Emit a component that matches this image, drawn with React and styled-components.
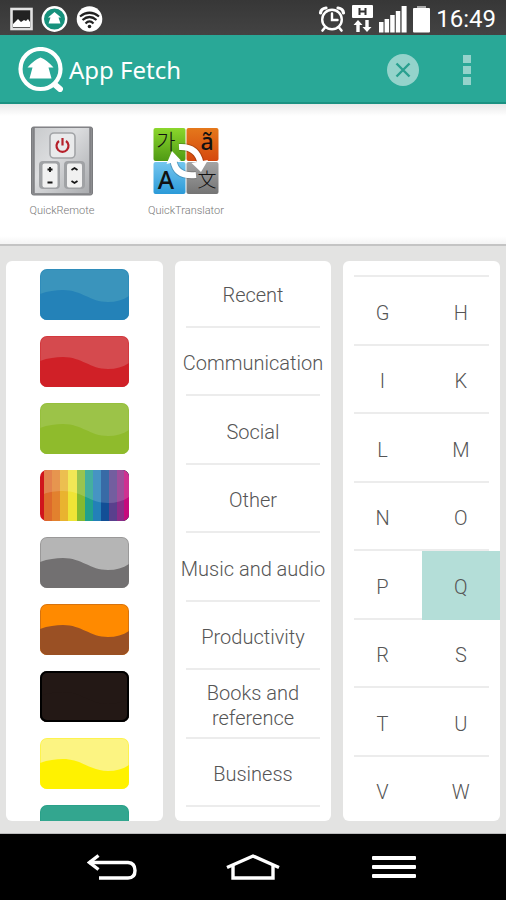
import * as React from 'react'
import styled, { createGlobalStyle } from 'styled-components'

const GlobalStyle = createGlobalStyle`
* { box-sizing: border-box; }

body {
  margin: 0;
  background: #e3e3e2;
  font-family: Roboto, "Noto Sans", sans-serif;
}

button {
  border: 0;
  padding: 0;
  background: none;
  color: inherit;
  font: inherit;
  cursor: pointer;
}

svg { display: block; flex: none; }
`

const Page = styled.div`
  height: 100vh;
  min-height: 600px;
  display: flex;
  flex-direction: column;
`

const StatusBar = styled.div`
  flex: none;
  height: 35px;
  padding: 2px 10px 0;
  display: flex;
  align-items: center;
  justify-content: space-between;
  background: linear-gradient(#373737, #434343);
  color: #fff;
`

const StatusGroup = styled.div`
  display: flex;
  align-items: center;
  gap: ${props => props.$gap};
`

const Clock = styled.time`
  font-size: 24px;
  line-height: 32px;
`

const Header = styled.header`
  flex: none;
  height: 69px;
  padding: 2px 23px 0 18px;
  display: flex;
  align-items: center;
  background: #29a897;
  border-bottom: 2px solid #1b9282;
`

const Title = styled.h1`
  flex: 1;
  margin: 0 0 0 6px;
  color: #fff;
  font-family: "Noto Sans", "Open Sans", sans-serif;
  font-size: 24px;
  font-weight: 400;
  line-height: 32px;
`

const HeaderButton = styled.button`
  width: 32px;
  height: 32px;
  margin-left: 32px;
  display: flex;
  align-items: center;
  justify-content: center;
`

const Results = styled.section`
  flex: none;
  height: 142px;
  padding-top: 22px;
  display: flex;
  background: linear-gradient(#e9e9e9, #fff 12px, #fff 132px, #f4f4f4);
  border-bottom: 2px solid #c4c4c4;
`

const AppTile = styled.button`
  width: 124px;
  display: flex;
  flex-direction: column;
  align-items: center;
  color: #777;
  font-size: 11px;
  font-weight: 300;
  line-height: 14px;

  svg { margin-bottom: 8px; }
`

const Filters = styled.main`
  flex: 1;
  min-height: 0;
  padding: 15px 6px 12px;
  display: grid;
  grid-template-columns: repeat(3, 1fr);
  grid-template-rows: 100%;
  gap: 12px;
  background: #e3e3e2;
  border-bottom: 1px solid #bdbdbd;
`

const Panel = styled.section`
  overflow: hidden;
  display: flex;
  flex-direction: column;
  border-radius: 6px;
  background: #fff;
  color: #555;
  font-size: 20px;
  font-weight: 300;
  line-height: 25px;
`

const Swatches = styled.div`
  padding-top: 8px;
  display: flex;
  flex-direction: column;
  align-items: center;
  gap: 16px;
`

const Swatch = styled.button`
  flex: none;
  height: 51px;
  overflow: hidden;
  border-radius: 7px;
`

const rowLine = `
  background: linear-gradient(#ececec, #ececec) no-repeat bottom / calc(100% - 22px) 2px;
`

const Categories = styled.div`
  flex: 1;
  margin: -2px 0 14px;
  display: grid;
  grid-auto-rows: 1fr;
`

const Category = styled.button`
  padding-top: 4px;
  ${rowLine}
`

const CategoryName = styled.span`
  display: inline-block;
  max-width: 150px;
`

const Letters = styled.div`
  flex: 1;
  margin-bottom: -4px;
  display: grid;
  grid-template-rows: 16px;
  grid-auto-rows: 1fr;
`

const LetterRow = styled.div`
  display: grid;
  grid-template-columns: 1fr 1fr;
  ${rowLine}
`

const Letter = styled.button`
  padding-top: 4px;
  background: ${props => (props.$active ? '#b4ded8' : 'none')};
`

const NavBar = styled.nav`
  flex: none;
  height: 66px;
  padding: 0 42px;
  display: grid;
  grid-template-columns: repeat(3, 1fr);
  background: #000;
`

const NavButton = styled.button`
  display: flex;
  align-items: center;
  justify-content: center;
`

const WAVE = 'M0 25 C8 22 16 21 23 21 C42 21 50 33 68 33 C76 33 83 31 89 27 V51 H0 Z'

const colors = [
  { name: 'blue', top: '#3a94bc', base: '#2482b8' },
  { name: 'red', top: '#d54a4e', base: '#d02027' },
  { name: 'green', top: '#9cc348', base: '#8fbb2c' },
  { name: 'rainbow' },
  { name: 'grey', top: '#b5b5b5', base: '#727071' },
  { name: 'orange', top: '#ff8a00', base: '#9a5024' },
  { name: 'black', top: '#231815', base: '#231815', edge: '#000' },
  { name: 'yellow', top: '#fcf482', base: '#fff200' },
  { name: 'teal', top: '#33a68f', base: '#1f9a80' },
]

const stripes = [
  [0, '#d0141c'],
  [4, '#dd6a2b'],
  [12, '#e2812e'],
  [20, '#e9b32f'],
  [28, '#efe436'],
  [37, '#85b92f'],
  [45, '#21a08d'],
  [53, '#2380b8'],
  [61, '#124f96'],
  [69, '#59408d'],
  [77, '#8c2d88'],
  [84, '#c50a7c'],
]

const categories = [
  'Recent',
  'Communication',
  'Social',
  'Other',
  'Music and audio',
  'Productivity',
  'Books and reference',
  'Business',
]

const letters = ['GH', 'IK', 'LM', 'NO', 'PQ', 'RS', 'TU', 'VW']

const FetchLogo = ({ size }) => (
  <svg width={size} height={size} viewBox="0 0 45 45">
    <path d="M35 36 L42 42" stroke="#fff" strokeWidth="6" strokeLinecap="round" />
    <circle cx="22.5" cy="22" r="20" fill="#29a897" stroke="#fff" strokeWidth="4.2" />
    <path d="M22.5 10.5 Q29 13 35.5 20.5 H30.5 L33.5 31.5 H11.5 L14.5 20.5 H9.5 Q16 13 22.5 10.5 Z" fill="#fff" />
  </svg>
)

const PictureIcon = () => (
  <svg width="23" height="24" viewBox="0 0 23 24">
    <rect x="1.5" y="2" width="20" height="20" fill="#222" stroke="#e2e2e2" strokeWidth="2.6" />
    <path d="M3 17 L8 12 L11 15 L14 13 L16 14 L18 12 L20 15 V20 H3 Z" fill="#fff" />
  </svg>
)

const StatusLogo = () => (
  <svg width="27" height="28" viewBox="0 0 27 28">
    <circle cx="13.5" cy="14" r="11.7" fill="#16917c" stroke="#fff" strokeWidth="2.4" />
    <path d="M13.5 7 L20 12.5 H17.5 L19.5 18.5 H7.5 L9.5 12.5 H7 Z" fill="#fff" />
  </svg>
)

const WifiIcon = () => (
  <svg width="27" height="28" viewBox="0 0 27 28">
    <circle cx="13.5" cy="14" r="12.8" fill="#fff" />
    <g fill="none" stroke="#222" strokeWidth="2.2">
      <path d="M4 11.5 Q13.5 4 23 11.5" />
      <path d="M6.5 15 Q13.5 9 20.5 15" />
      <path d="M9.5 18.5 Q13.5 14.5 17.5 18.5" />
    </g>
    <circle cx="13.5" cy="21.5" r="1.8" fill="#222" />
  </svg>
)

const AlarmIcon = () => (
  <svg width="28" height="28" viewBox="0 0 28 28" fill="none" stroke="#fff" strokeLinecap="round">
    <circle cx="14" cy="14.5" r="9.8" strokeWidth="2.4" />
    <path d="M14 8.5 V15 H19.5" strokeWidth="2.4" />
    <path d="M2.5 8 Q3 3.5 8 3 M25.5 8 Q25 3.5 20 3" strokeWidth="3.2" />
    <path d="M7 22.5 L4.5 25.5 M21 22.5 L23.5 25.5" strokeWidth="2.6" />
  </svg>
)

const DataIcon = () => (
  <svg width="21" height="28" viewBox="0 0 21 28">
    <rect width="21" height="13" rx="1" fill="#fff" />
    <path d="M7.5 3 V10 M13.5 3 V10 M7 6.5 H14" stroke="#333" strokeWidth="2" />
    <path d="M6 15 L10.5 20 H7.7 V27 H4.3 V20 H1.5 Z M15 27 L19.5 22 H16.7 V15 H13.3 V22 H10.5 Z" fill="#fff" />
  </svg>
)

const SignalIcon = () => (
  <svg width="28" height="28" viewBox="0 0 28 28" fill="#fff">
    <rect x="0" y="17" width="4.5" height="10.5" />
    <rect x="5.6" y="14" width="4.5" height="13.5" />
    <rect x="11.2" y="10" width="4.5" height="17.5" />
    <rect x="16.8" y="6" width="4.5" height="21.5" />
    <rect x="22.6" y="1" width="5" height="26.5" />
  </svg>
)

const BatteryIcon = () => (
  <svg width="17" height="28" viewBox="0 0 17 28">
    <rect x="4" y="1" width="9" height="4" fill="#aaa" />
    <rect y="3" width="17" height="24.5" rx="1" fill="#fff" />
  </svg>
)

const RemoteIcon = () => (
  <svg width="62" height="70" viewBox="0 0 62 70">
    <defs>
      <linearGradient id="remoteBody" x1="0" x2="1" y1="0" y2="1">
        <stop offset="0" stopColor="#c9cbcd" />
        <stop offset="0.4" stopColor="#dcdddf" />
        <stop offset="1" stopColor="#a9abae" />
      </linearGradient>
    </defs>
    <rect x="0.5" y="1" width="61" height="68" rx="2" fill="#8c8d90" stroke="#7a7b7e" />
    <rect x="3.5" y="2" width="55" height="65" fill="url(#remoteBody)" />
    <path d="M3 1 V67 M59 1 V67" stroke="#76777a" />
    <rect x="19" y="7" width="25" height="25" rx="4" fill="#e9eaeb" stroke="#a2a4a7" strokeWidth="1.6" />
    <path d="M28 15 A6 6 0 1 0 35 15" fill="none" stroke="#b6202a" strokeWidth="2.2" />
    <path d="M31.5 12 V19.5" stroke="#b6202a" strokeWidth="2.2" />
    <rect x="8" y="35" width="21" height="28" rx="4" fill="#a0a2a5" />
    <rect x="33" y="35" width="21" height="28" rx="4" fill="#a0a2a5" />
    <rect x="11.5" y="37.5" width="15" height="24" rx="2" fill="#f1f1f1" />
    <rect x="36" y="37.5" width="15" height="24" rx="2" fill="#f1f1f1" />
    <g fill="none" stroke="#151515" strokeWidth="1.8">
      <path d="M19 41 V46 M16.5 43.5 H21.5 M16.5 56.5 H21.5" />
      <path d="M40.5 44 L43.5 42 L46.5 44 M40.5 55 L43.5 57 L46.5 55" />
    </g>
  </svg>
)

const TranslatorIcon = () => (
  <svg width="66" height="70" viewBox="0 0 66 70" overflow="visible">
    <defs>
      <linearGradient id="tGreen" x2="0" y2="1">
        <stop offset="0" stopColor="#8bd62c" />
        <stop offset="1" stopColor="#4f9a14" />
      </linearGradient>
      <linearGradient id="tOrange" x2="0" y2="1">
        <stop offset="0" stopColor="#e5781b" />
        <stop offset="1" stopColor="#d5480e" />
      </linearGradient>
      <linearGradient id="tBlue" x2="0" y2="1">
        <stop offset="0" stopColor="#74c6ef" />
        <stop offset="1" stopColor="#2b9ad8" />
      </linearGradient>
      <linearGradient id="tGrey" x2="0" y2="1">
        <stop offset="0" stopColor="#a4a4a4" />
        <stop offset="1" stopColor="#747474" />
      </linearGradient>
    </defs>
    <rect x="0.5" y="2" width="32" height="33" rx="2" fill="url(#tGreen)" />
    <rect x="33.5" y="2" width="32" height="33" rx="2" fill="url(#tOrange)" />
    <rect x="0.5" y="36" width="32" height="32" rx="2" fill="url(#tBlue)" />
    <rect x="33.5" y="36" width="32" height="32" rx="2" fill="url(#tGrey)" />
    <g fill="#111" textAnchor="middle" fontFamily='"Noto Sans", "Noto Sans CJK KR", sans-serif'>
      <text x="13" y="23" fontSize="21">가</text>
      <text x="54" y="24" fontSize="23" fontWeight="500">ã</text>
      <text x="13" y="63" fontSize="25" fontWeight="500">A</text>
      <text x="54" y="61" fontSize="19">文</text>
    </g>
    <g fill="none" stroke="#000" strokeWidth="8" opacity="0.18">
      <path d="M26 21 Q44 20 47.5 37" />
      <path d="M43 49 Q23 51 20.5 35" />
    </g>
    <g fill="none" stroke="#fff" strokeWidth="6">
      <path d="M26 21 Q44 20 47.5 37" />
      <path d="M43 49 Q23 51 20.5 35" />
    </g>
    <path d="M38.5 37 L55 34 L48 46 Z M13.5 38 L28 34.5 L19 25 Z" fill="#fff" />
  </svg>
)

const ColorTile = ({ color }) => (
  <svg width="89" height="51" viewBox="0 0 89 51">
    {color.top ? (
      <>
        <rect width="89" height="51" fill={color.top} />
        <path d={WAVE} fill={color.base} />
      </>
    ) : (
      <>
        {stripes.map(([x, fill]) => (
          <rect key={x} x={x} width={89 - x} height="51" fill={fill} />
        ))}
        <path d="M4 0 H89 V27 C83 31 76 33 68 33 C50 33 42 21 23 21 C16 21 8 22 4 24 Z" fill="#fff" opacity="0.16" />
      </>
    )}
    <rect
      x="0.5"
      y="0.5"
      width="88"
      height="50"
      rx="6.5"
      fill="none"
      stroke={color.edge || color.base || 'none'}
      strokeWidth={color.edge ? 3 : 1}
      opacity={color.edge ? 1 : 0.4}
    />
  </svg>
)

const App = () => {
  const [active, setActive] = React.useState('Q')

  return (
    <Page>
      <GlobalStyle />
      <StatusBar>
        <StatusGroup $gap="8px">
          <PictureIcon />
          <StatusLogo />
          <WifiIcon />
        </StatusGroup>
        <StatusGroup $gap="6px">
          <AlarmIcon />
          <DataIcon />
          <SignalIcon />
          <BatteryIcon />
          <Clock>16:49</Clock>
        </StatusGroup>
      </StatusBar>

      <Header>
        <FetchLogo size={45} />
        <Title>App Fetch</Title>
        <HeaderButton aria-label="Clear">
          <svg width="32" height="32" viewBox="0 0 32 32">
            <circle cx="16" cy="16" r="16" fill="#94d3cb" />
            <path d="M9.5 9.5 L22.5 22.5 M22.5 9.5 L9.5 22.5" stroke="#29a08f" strokeWidth="2.4" />
          </svg>
        </HeaderButton>
        <HeaderButton aria-label="More options">
          <svg width="8" height="30" viewBox="0 0 8 30" fill="#94d3cb">
            <rect width="8" height="8" />
            <rect y="11" width="8" height="8" />
            <rect y="22" width="8" height="8" />
          </svg>
        </HeaderButton>
      </Header>

      <Results>
        <AppTile>
          <RemoteIcon />
          QuickRemote
        </AppTile>
        <AppTile>
          <TranslatorIcon />
          QuickTranslator
        </AppTile>
      </Results>

      <Filters>
        <Panel>
          <Swatches>
            {colors.map(color => (
              <Swatch key={color.name} aria-label={color.name}>
                <ColorTile color={color} />
              </Swatch>
            ))}
          </Swatches>
        </Panel>
        <Panel>
          <Categories>
            {categories.map(name => (
              <Category key={name}>
                <CategoryName>{name}</CategoryName>
              </Category>
            ))}
          </Categories>
        </Panel>
        <Panel>
          <Letters>
            <LetterRow />
            {letters.map(pair => (
              <LetterRow key={pair}>
                {pair.split('').map(letter => (
                  <Letter key={letter} $active={letter === active} onClick={() => setActive(letter)}>
                    {letter}
                  </Letter>
                ))}
              </LetterRow>
            ))}
          </Letters>
        </Panel>
      </Filters>

      <NavBar>
        <NavButton aria-label="Back">
          <svg width="50" height="26" viewBox="0 0 50 26" fill="none" stroke="#fff" strokeWidth="3.4">
            <path d="M2 8.5 H41 Q48 9 48 16.5 Q48 24 41 24 H12" />
            <path d="M11.5 1.5 L2.5 8.5 L11.5 15.5" />
          </svg>
        </NavButton>
        <NavButton aria-label="Home">
          <svg width="54" height="26" viewBox="0 0 54 26" fill="none" stroke="#fff" strokeWidth="3.4">
            <path d="M1 13.5 L27 2 L53 13.5" />
            <path d="M7 11.5 V24 H47 V11.5" />
          </svg>
        </NavButton>
        <NavButton aria-label="Menu">
          <svg width="44" height="22" viewBox="0 0 44 22" fill="#fff">
            <rect y="0" width="44" height="4" rx="1" />
            <rect y="9" width="44" height="4" rx="1" />
            <rect y="18" width="44" height="4" rx="1" />
          </svg>
        </NavButton>
      </NavBar>
    </Page>
  )
}

export default App
